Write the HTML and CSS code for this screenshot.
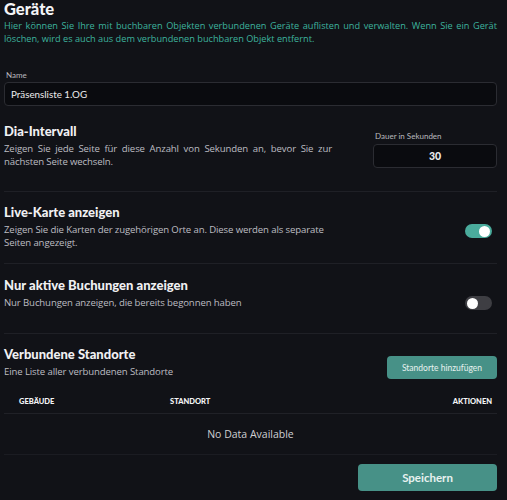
FILE: index.html
```html
<!DOCTYPE html>
<html lang="de">
<head>
<meta charset="utf-8">
<link rel="stylesheet" href="styles.css">
</head>
<body>
<div class="page">
  <header class="head">
    <h1 class="title">Geräte</h1>
    <p class="intro">Hier können Sie Ihre mit buchbaren Objekten verbundenen Geräte auflisten und verwalten. Wenn Sie ein Gerät löschen, wird es auch aus dem verbundenen buchbaren Objekt entfernt.</p>
  </header>

  <div class="field name-field">
    <label class="label">Name</label>
    <div class="input">Präsensliste 1.OG</div>
  </div>

  <section class="row row-dia">
    <div class="row-text">
      <h2 class="row-title">Dia-Intervall</h2>
      <p class="row-desc justify">Zeigen Sie jede Seite für diese Anzahl von Sekunden an, bevor Sie zur nächsten Seite wechseln.</p>
    </div>
    <div class="field dur-field">
      <label class="label">Dauer in Sekunden</label>
      <div class="input input-num">30</div>
    </div>
  </section>

  <hr class="sep">

  <section class="row row-toggle row-live">
    <div class="row-text">
      <h2 class="row-title">Live-Karte anzeigen</h2>
      <p class="row-desc">Zeigen Sie die Karten der zugehörigen Orte an. Diese werden als separate Seiten angezeigt.</p>
    </div>
    <span class="toggle on"><span class="knob"></span></span>
  </section>

  <hr class="sep">

  <section class="row row-toggle row-active">
    <div class="row-text">
      <h2 class="row-title">Nur aktive Buchungen anzeigen</h2>
      <p class="row-desc">Nur Buchungen anzeigen, die bereits begonnen haben</p>
    </div>
    <span class="toggle"><span class="knob"></span></span>
  </section>

  <hr class="sep">

  <section class="row row-loc">
    <div class="row-text">
      <h2 class="row-title">Verbundene Standorte</h2>
      <p class="row-desc">Eine Liste aller verbundenen Standorte</p>
    </div>
    <button class="btn btn-small">Standorte hinzufügen</button>
  </section>

  <div class="table">
    <div class="thead">
      <span class="th th-geb">Gebäude</span>
      <span class="th th-std">Standort</span>
      <span class="th th-act">Aktionen</span>
    </div>
    <div class="tempty">No Data Available</div>
  </div>

  <div class="footer">
    <button class="btn btn-save">Speichern</button>
  </div>
</div>
</body>
</html>
```
FILE: styles.css
```css
* { box-sizing: border-box; }
html, body { margin: 0; padding: 0; }
body {
  background: #111217;
  color: #ececee;
  font-family: Lato, "Open Sans", sans-serif;
  width: 507px;
  height: 500px;
  overflow: hidden;
}
.page {
  padding: 0 10px 0 4px;
  display: flex;
  flex-direction: column;
}
.title {
  margin: 0;
  font-size: 16.5px;
  line-height: 18px;
  font-weight: 900;
  color: #f4f4f6;
}
.intro {
  margin: 0;
  font-family: "Open Sans", sans-serif;
  font-size: 9.2px;
  line-height: 13px;
  color: #3db39e;
  text-align: justify;
  padding-top: 1px;
}
.field { display: flex; flex-direction: column; }
.label {
  font-size: 8px;
  line-height: 10px;
  color: #b9b9be;
  margin: 0 0 2px 2px;
}
.name-field { margin-top: 25px; }
.input {
  height: 24px;
  border: 1px solid #2b2c32;
  border-radius: 4px;
  background: #0a0b0f;
  font-size: 9.8px;
  line-height: 22px;
  padding: 0 6px;
  color: #ececee;
}
.input-num {
  text-align: center;
  font-weight: 900;
  font-size: 10.5px;
}
.row {
  display: flex;
  justify-content: space-between;
  align-items: flex-start;
}
.row-text { width: 328px; }
.row-title {
  margin: 0;
  font-size: 13px;
  line-height: 16px;
  font-weight: 900;
  color: #f0f0f2;
}
.row-desc {
  margin: 3px 0 0;
  font-family: "Open Sans", sans-serif;
  font-size: 9.6px;
  letter-spacing: -0.12px;
  line-height: 13px;
  color: #bdbdc2;
}
.justify { text-align: justify; }
.row-dia { padding: 17px 0 23px; }
.dur-field { width: 124px; margin-top: 8px; }
.dur-field .label { margin-bottom: 3px; }
.sep {
  border: 0;
  border-top: 1px solid #1f2026;
  margin: 0;
  height: 0;
}
.row-toggle { padding-top: 12px; }
.row-live { padding-bottom: 14px; }
.row-active { padding-top: 13px; padding-bottom: 23px; }
.toggle {
  width: 27px;
  height: 14px;
  border-radius: 7px;
  background: #3e3e43;
  position: relative;
  margin: 20px 5px 0 0;
  flex: none;
}
.row-active .toggle { margin-top: 19px; }
.toggle .knob {
  position: absolute;
  top: 1.5px;
  left: 2px;
  width: 11px;
  height: 11px;
  border-radius: 50%;
  background: #ffffff;
}
.toggle.on { background: #4aab9c; }
.toggle.on .knob { left: 14px; }
.row-loc { padding-top: 12px; align-items: flex-end; }
.btn {
  border: 0;
  background: #479187;
  color: #e8f2f0;
  font-family: inherit;
  border-radius: 4px;
  cursor: pointer;
}
.btn-small {
  width: 110px;
  height: 23px;
  font-size: 8.5px;
  padding: 0;
  margin-bottom: -1px;
}
.table { margin-top: 12px; }
.thead {
  display: flex;
  align-items: center;
  height: 24px;
  border-bottom: 1px solid #202127;
  padding: 0 5px 0 15px;
}
.th {
  font-size: 7.5px;
  font-weight: 900;
  text-transform: uppercase;
  color: #f4f4f6;
}
.th-geb { width: 151px; }
.th-std { flex: 1; }
.tempty {
  height: 41px;
  border-bottom: 1px solid #1b1c22;
  display: flex;
  align-items: center;
  justify-content: center;
  font-family: "Open Sans", sans-serif;
  font-size: 10.5px;
  color: #cfcfd3;
}
.footer {
  display: flex;
  justify-content: flex-end;
  padding-top: 9px;
}
.btn-save {
  width: 139px;
  height: 27px;
  font-size: 11.5px;
  font-weight: 700;
}
```
